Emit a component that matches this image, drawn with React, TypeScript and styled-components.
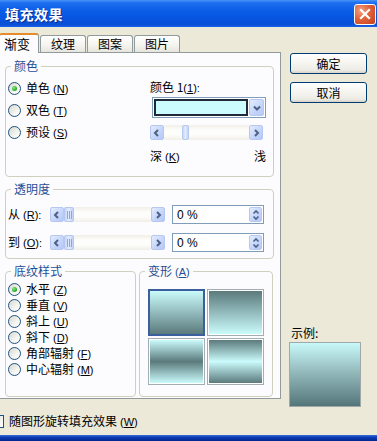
import styled, { createGlobalStyle } from "styled-components";

const GlobalStyle = createGlobalStyle`
  html, body { margin: 0; padding: 0; }
  body {
    background: #ece9d8;
    font-family: "Noto Sans CJK SC", "Liberation Sans", sans-serif;
    font-size: 12px;
    color: #000;
  }
  * { box-sizing: border-box; }
`;

const LIGHT = "#cbfbfc";
const DARK = "#5b7a7c";

const Window = styled.div`
  width: 377px;
  height: 441px;
  display: flex;
  flex-direction: column;
  overflow: hidden;
  background: #ece9d8;
`;

const TitleBar = styled.div`
  height: 27px;
  flex-shrink: 0;
  display: flex;
  align-items: center;
  justify-content: space-between;
  padding: 0 1px 0 5px;
  background: linear-gradient(
    180deg,
    #4a94f8 0%,
    #1f6ff0 10%,
    #0b5de7 40%,
    #0654e0 70%,
    #0a4fd6 90%,
    #1a63e6 100%
  );
`;

const Title = styled.span`
  color: #fff;
  font-weight: 700;
  font-size: 14px;
  line-height: 16px;
  letter-spacing: 0.5px;
  text-shadow: 1px 1px 0 #0b2a8c;
`;

const CloseButton = styled.div`
  width: 22px;
  height: 21px;
  margin-top: 1px;
  border: 1px solid #fff;
  border-radius: 3px;
  background: radial-gradient(circle at 30% 30%, #f0a282 0%, #e0623a 45%, #c4401d 100%);
  display: flex;
  align-items: center;
  justify-content: center;
`;

const Body = styled.div`
  flex: 1;
  display: flex;
  padding-top: 6px;
  min-height: 0;
`;

const LeftCol = styled.div`
  width: 281px;
  display: flex;
  flex-direction: column;
`;

const TabStrip = styled.div`
  height: 19px;
  display: flex;
  align-items: flex-end;
  gap: 1px;
`;

const Tab = styled.div<{ $active?: boolean }>`
  position: relative;
  z-index: ${(p) => (p.$active ? 2 : 1)};
  height: ${(p) => (p.$active ? "20px" : "17px")};
  margin-bottom: ${(p) => (p.$active ? "-1px" : "0")};
  margin-left: ${(p) => (p.$active ? "-1px" : "0")};
  width: ${(p) => (p.$active ? "40px" : "auto")};
  padding: ${(p) => (p.$active ? "0 0 0 4px" : "0 10px")};
  display: flex;
  align-items: center;
  font-size: ${(p) => (p.$active ? "13px" : "12px")};
  line-height: 14px;
  border: 1px solid #919b9c;
  border-bottom: none;
  border-top: ${(p) => (p.$active ? "2px solid #e68b2c" : "1px solid #919b9c")};
  border-radius: 3px 3px 0 0;
  background: ${(p) =>
    p.$active ? "#fcfcfe" : "linear-gradient(180deg, #fff 0%, #f4f3ee 60%, #e6e4dc 100%)"};
`;

const Panel = styled.div`
  height: 347px;
  display: flex;
  flex-direction: column;
  padding: 7px 6px 1px 5px;
  border: 1px solid #919b9c;
  border-left: none;
  background: #fcfcfe;
`;

const Group = styled.fieldset<{ $gap?: number }>`
  margin: ${(p) => p.$gap ?? 0}px 0 0 0;
  padding: 0;
  min-width: 0;
  border: 1px solid #d0d0bf;
  border-radius: 4px;
`;

const Legend = styled.legend`
  margin-left: 5px;
  padding: 0 3px;
  color: #1f4f96;
  font-size: 12px;
  line-height: 12px;
`;

const ColorBody = styled.div`
  display: grid;
  grid-template-columns: 142px 1fr;
  padding: 5px 7px 12px 2px;
`;

const RadioList = styled.div`
  display: flex;
  flex-direction: column;
`;

const RadioRow = styled.label<{ $h: number }>`
  height: ${(p) => p.$h}px;
  display: flex;
  align-items: center;
  gap: 5px;
  line-height: 14px;
  white-space: nowrap;
`;

const RadioCircle = styled.span<{ $checked?: boolean }>`
  width: 13px;
  height: 13px;
  flex-shrink: 0;
  border-radius: 50%;
  border: 1px solid #1c5180;
  background: linear-gradient(135deg, #d8d8cf 0%, #f4f4f0 60%, #fff 100%);
  display: flex;
  align-items: center;
  justify-content: center;
  &::after {
    content: "";
    display: ${(p) => (p.$checked ? "block" : "none")};
    width: 5px;
    height: 5px;
    border-radius: 50%;
    background: radial-gradient(circle at 35% 35%, #8be68b 0%, #2fb02f 60%, #1a861a 100%);
  }
`;

const Key = styled.span`
  font-family: "Liberation Sans", sans-serif;
  font-size: 11px;
  margin-left: 3px;
`;

const ColorSide = styled.div`
  display: flex;
  flex-direction: column;
`;

const FieldLabel = styled.div`
  margin-top: 3px;
  line-height: 14px;
`;

const Combo = styled.div`
  margin: 2px 0 0 2px;
  height: 21px;
  display: flex;
  gap: 1px;
  padding: 1px;
  border: 1px solid #7f9db9;
  background: #fff;
`;

const Swatch = styled.div`
  flex: 1;
  border: 2px solid #1e2a3a;
  background: #ccfcfd;
`;

const BlueButton = styled.span<{ $w?: number; $h?: number }>`
  width: ${(p) => p.$w ?? 14}px;
  height: ${(p) => p.$h ?? 15}px;
  flex-shrink: 0;
  display: flex;
  align-items: center;
  justify-content: center;
  border: 1px solid #b6c8f2;
  border-radius: 2px;
  background: linear-gradient(135deg, #e4ecfe 0%, #c6d6fb 55%, #b4c8f6 100%);
`;

const SliderBar = styled.div<{ $w: number; $mt?: number }>`
  width: ${(p) => p.$w}px;
  margin-top: ${(p) => p.$mt ?? 0}px;
  height: 15px;
  display: flex;
  align-items: stretch;
`;

const Track = styled.div`
  flex: 1;
  display: flex;
  background: linear-gradient(180deg, #f1efe8 0%, #fdfdfb 35%, #fdfdfb 65%, #f1efe8 100%);
`;

const Thumb = styled.span<{ $w: number; $offset: number }>`
  width: ${(p) => p.$w}px;
  margin-left: ${(p) => p.$offset}px;
  border: 1px solid #b6c8f2;
  border-radius: 2px;
  background: linear-gradient(90deg, #c6d6fb 0%, #e4ecfe 50%, #c0d2fa 100%);
  display: flex;
  align-items: center;
  justify-content: center;
`;

const Grip = styled.span`
  width: 5px;
  height: 8px;
  background: repeating-linear-gradient(90deg, #8ea6dc 0 1px, transparent 1px 2px);
`;

const ShadeRow = styled.div`
  margin-top: 9px;
  display: flex;
  justify-content: space-between;
  line-height: 14px;
`;

const TransBody = styled.div`
  display: flex;
  flex-direction: column;
  gap: 9px;
  padding: 10px 7px 6px 2px;
`;

const TransRow = styled.div`
  height: 19px;
  display: flex;
  align-items: center;
`;

const TransLabel = styled.span`
  width: 42px;
  line-height: 14px;
  white-space: nowrap;
`;

const SpinBox = styled.div`
  margin-left: 7px;
  width: 92px;
  height: 19px;
  display: flex;
  align-items: center;
  padding: 0 1px 0 4px;
  border: 1px solid #7f9db9;
  background: #fff;
`;

const SpinValue = styled.span`
  flex: 1;
  font-family: "Liberation Sans", sans-serif;
  font-size: 12px;
`;

const BottomRow = styled.div`
  flex: 1;
  display: flex;
  gap: 3px;
  margin-top: 6px;
`;

const PatternGroup = styled(Group)<{ $w: number }>`
  width: ${(p) => p.$w}px;
`;

const PatternBody = styled.div`
  padding: 4px 0 0 2px;
`;

const VariantGrid = styled.div`
  display: grid;
  grid-template-columns: 57px 57px;
  grid-auto-rows: 47px;
  gap: 2px;
  padding: 11px 0 0 8px;
`;

const gradients: Record<string, string> = {
  down: `linear-gradient(180deg, ${LIGHT}, ${DARK})`,
  up: `linear-gradient(180deg, ${DARK}, ${LIGHT})`,
  mid: `linear-gradient(180deg, ${LIGHT}, ${DARK} 50%, ${LIGHT})`,
  edge: `linear-gradient(180deg, ${DARK}, ${LIGHT} 50%, ${DARK})`,
};

const Variant = styled.div<{ $kind: string; $selected?: boolean }>`
  border: ${(p) => (p.$selected ? "2px solid #3a5f9c" : "1px solid #a3adb2")};
  padding: ${(p) => (p.$selected ? "0" : "1px")};
  background: #fff;
  &::before {
    content: "";
    display: block;
    width: 100%;
    height: 100%;
    background: ${(p) => gradients[p.$kind]};
  }
`;

const CheckRow = styled.label`
  margin-top: 15px;
  height: 14px;
  display: flex;
  align-items: center;
  gap: 5px;
  line-height: 14px;
`;

const CheckBox = styled.span`
  width: 13px;
  height: 13px;
  margin-left: -9px;
  border: 1px solid #1c5180;
  background: linear-gradient(135deg, #dcdcd5, #fff);
`;

const RightCol = styled.div`
  width: 96px;
  display: flex;
  flex-direction: column;
  padding: 20px 0 0 9px;
`;

const DialogButton = styled.button<{ $mt?: number }>`
  width: 77px;
  height: 21px;
  margin-top: ${(p) => p.$mt ?? 0}px;
  padding: 0;
  font: inherit;
  font-size: 12px;
  line-height: 14px;
  color: #000;
  border: 1px solid #003c74;
  border-radius: 3px;
  background: linear-gradient(180deg, #fff 0%, #f5f4ef 50%, #ecebe5 85%, #d8d2c6 100%);
`;

const SampleLabel = styled.div`
  margin-top: 223px;
  line-height: 14px;
  padding-left: 1px;
`;

const SampleBox = styled.div`
  margin: 2px 0 0 -1px;
  width: 72px;
  height: 65px;
  border: 1px solid #a0a8a8;
  background: linear-gradient(180deg, #c8f8f9 0%, #8fb4b6 50%, #54767a 100%);
`;

const BottomFrame = styled.div`
  height: 6px;
  flex-shrink: 0;
  background: linear-gradient(180deg, #3a6fd8 0%, #0b3bb4 40%, #00278f 100%);
`;

const Chevron = ({ dir }: { dir: "left" | "right" | "down" }) => {
  const pts = dir === "left" ? "5,1 2,4 5,7" : dir === "right" ? "3,1 6,4 3,7" : "1,2.5 4,5.5 7,2.5";
  return (
    <svg width="8" height="8" viewBox="0 0 8 8">
      <polyline points={pts} fill="none" stroke="#4d6185" strokeWidth="2" />
    </svg>
  );
};

const SpinArrows = () => (
  <svg width="8" height="12" viewBox="0 0 8 12">
    <polyline points="1.5,4.5 4,2 6.5,4.5" fill="none" stroke="#4d6185" strokeWidth="1.6" />
    <polyline points="1.5,7.5 4,10 6.5,7.5" fill="none" stroke="#4d6185" strokeWidth="1.6" />
  </svg>
);

const Slider = ({ width, offset, thumbW, grip, mt }: { width: number; offset: number; thumbW: number; grip?: boolean; mt?: number }) => (
  <SliderBar $w={width} $mt={mt}>
    <BlueButton>
      <Chevron dir="left" />
    </BlueButton>
    <Track>
      <Thumb $w={thumbW} $offset={offset}>{grip && <Grip />}</Thumb>
    </Track>
    <BlueButton>
      <Chevron dir="right" />
    </BlueButton>
  </SliderBar>
);

const Radio = ({ label, k, checked, h }: { label: string; k: string; checked?: boolean; h: number }) => (
  <RadioRow $h={h}>
    <RadioCircle $checked={checked} />
    <span>
      {label}
      <Key>
        (<u>{k}</u>)
      </Key>
    </span>
  </RadioRow>
);

const styles = [
  { label: "水平", k: "Z", checked: true },
  { label: "垂直", k: "V" },
  { label: "斜上", k: "U" },
  { label: "斜下", k: "D" },
  { label: "角部辐射", k: "F" },
  { label: "中心辐射", k: "M" },
];

export default function App() {
  return (
    <>
      <GlobalStyle />
      <Window>
        <TitleBar>
          <Title>填充效果</Title>
          <CloseButton>
            <svg width="12" height="12" viewBox="0 0 12 12">
              <path d="M2 2 L10 10 M10 2 L2 10" stroke="#fff" strokeWidth="2.2" strokeLinecap="square" />
            </svg>
          </CloseButton>
        </TitleBar>
        <Body>
          <LeftCol>
            <TabStrip>
              <Tab $active>渐变</Tab>
              <Tab>纹理</Tab>
              <Tab>图案</Tab>
              <Tab>图片</Tab>
            </TabStrip>
            <Panel>
              <Group>
                <Legend>颜色</Legend>
                <ColorBody>
                  <RadioList>
                    <Radio label="单色" k="N" checked h={22} />
                    <Radio label="双色" k="T" h={22} />
                    <Radio label="预设" k="S" h={22} />
                  </RadioList>
                  <ColorSide>
                    <FieldLabel>
                      颜色 1<Key style={{ marginLeft: 0 }}>(<u>1</u>):</Key>
                    </FieldLabel>
                    <Combo>
                      <Swatch />
                      <BlueButton $w={15} $h={17}>
                        <Chevron dir="down" />
                      </BlueButton>
                    </Combo>
                    <Slider width={113} offset={18} thumbW={7} mt={7} />
                    <ShadeRow>
                      <span>
                        深<Key>(<u>K</u>)</Key>
                      </span>
                      <span>浅</span>
                    </ShadeRow>
                  </ColorSide>
                </ColorBody>
              </Group>
              <Group $gap={6}>
                <Legend>透明度</Legend>
                <TransBody>
                  <TransRow>
                    <TransLabel>
                      从<Key>(<u>R</u>):</Key>
                    </TransLabel>
                    <Slider width={115} offset={0} thumbW={10} grip />
                    <SpinBox>
                      <SpinValue>0 %</SpinValue>
                      <BlueButton $w={13} $h={15}>
                        <SpinArrows />
                      </BlueButton>
                    </SpinBox>
                  </TransRow>
                  <TransRow>
                    <TransLabel>
                      到<Key>(<u>O</u>):</Key>
                    </TransLabel>
                    <Slider width={115} offset={0} thumbW={10} grip />
                    <SpinBox>
                      <SpinValue>0 %</SpinValue>
                      <BlueButton $w={13} $h={15}>
                        <SpinArrows />
                      </BlueButton>
                    </SpinBox>
                  </TransRow>
                </TransBody>
              </Group>
              <BottomRow>
                <PatternGroup $w={131}>
                  <Legend>底纹样式</Legend>
                  <PatternBody>
                    <RadioList>
                      {styles.map((s) => (
                        <Radio key={s.k} label={s.label} k={s.k} checked={s.checked} h={16} />
                      ))}
                    </RadioList>
                  </PatternBody>
                </PatternGroup>
                <PatternGroup $w={134}>
                  <Legend>
                    变形<Key>(<u>A</u>)</Key>
                  </Legend>
                  <VariantGrid>
                    <Variant $kind="down" $selected />
                    <Variant $kind="up" />
                    <Variant $kind="mid" />
                    <Variant $kind="edge" />
                  </VariantGrid>
                </PatternGroup>
              </BottomRow>
            </Panel>
            <CheckRow>
              <CheckBox />
              <span>
                随图形旋转填充效果<Key>(<u>W</u>)</Key>
              </span>
            </CheckRow>
          </LeftCol>
          <RightCol>
            <DialogButton>确定</DialogButton>
            <DialogButton $mt={8}>取消</DialogButton>
            <SampleLabel>示例:</SampleLabel>
            <SampleBox />
          </RightCol>
        </Body>
        <BottomFrame />
      </Window>
    </>
  );
}
